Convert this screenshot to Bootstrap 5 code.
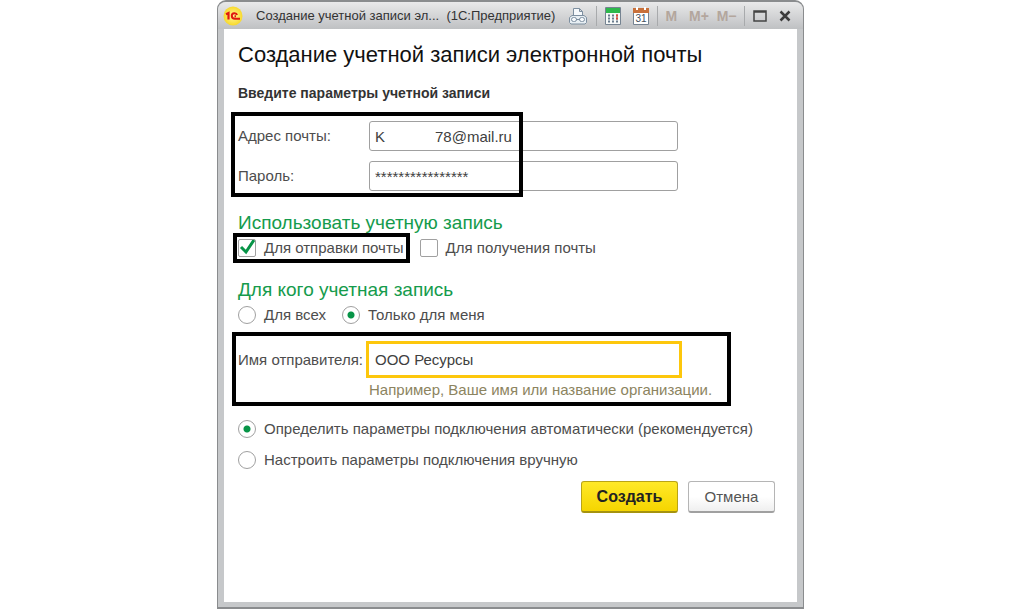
<!DOCTYPE html>
<html lang="ru">
<head>
<meta charset="utf-8">
<meta name="viewport" content="width=device-width, initial-scale=1">
<title>Создание учетной записи электронной почты</title>
<link rel="stylesheet" href="https://cdn.jsdelivr.net/npm/bootstrap@5.3.0/dist/css/bootstrap.min.css">
<style>
  body { font-family: "Liberation Sans", Arial, sans-serif; font-size: 15px; line-height: 20px; color: #4d4d4d; background: #fff; padding-right: 3px; }
  .app-window { max-width: 587px; background: #c6c8ca; border: 1px solid #8a8c8e; border-width: 2px 1px; border-radius: 9px 9px 0 0; padding: 0 6px 5px; }
  .title-bar { height: 27px; margin: 0 -6px; padding: 0 12px 0 5px; background: linear-gradient(#e9e9ea, #bfc1c3); border-radius: 8px 8px 0 0; color: #333; }
  .title-text { font-size: 13px; margin-left: 13px; }
  .tools { margin-left: 13px; }
  .tool { border: 0; background: none; padding: 0; line-height: 20px; color: #333; }
  .mem { font-size: 14px; font-weight: bold; color: #b3a69d; }
  .sep { width: 1px; height: 20px; background: #a8aaac; }
  .panel { background: #fff; padding: 14px 22px 20px 14px; }
  h1 { font-size: 22px; line-height: 24px; font-weight: 400; color: #111; margin-bottom: 17px; }
  .intro { font-size: 14px; line-height: 18px; font-weight: bold; color: #333; margin-bottom: 19px; }
  legend { font-size: 19px; line-height: 24px; color: #159b4c; margin-bottom: 3px; }
  .section { margin-bottom: 20px; }
  .section-tight { margin-bottom: 16px; }
  .stack { row-gap: 10px; }
  .name-label { width: 131px; flex: none; white-space: nowrap; }
  .field { height: 30px; max-width: 309px; padding: 0 5px; border: 1px solid #a0a0a0; border-radius: 3px; color: #404040; font-size: 15px; }
  .field-active, .field-active:focus { height: 37px; max-width: 316px; margin-left: -3px; padding: 0 6px; border: 3px solid #fdc70c; border-radius: 0; box-shadow: none; }
  .hint { color: #8c8460; line-height: 18px; margin: 3px 0 0 131px; }
  .tick { appearance: none; width: 18px; height: 18px; margin: 0; border: 1px solid #a0a0a0; background: #fff center / 18px no-repeat; flex: none; }
  .tick[type=checkbox] { border-radius: 2px; }
  .tick[type=radio] { border-radius: 50%; }
  .tick[type=radio]:checked { background-image: radial-gradient(circle, #079447 3px, transparent 4px); }
  .tick[type=checkbox]:checked { background-image: url("data:image/svg+xml,%3Csvg xmlns='http://www.w3.org/2000/svg' viewBox='0 0 18 18'%3E%3Cpath d='M3 8l5 5 8-12' fill='none' stroke='%23079447' stroke-width='3'/%3E%3C/svg%3E"); }
  .option { gap: 8px; height: 20px; }
  .choices { row-gap: 11px; }
  .marked { position: relative; }
  .marked::after { content: ""; position: absolute; border: 4px solid #000; pointer-events: none; }
  .mark-login::after { inset: -9px auto -6px -7px; width: 292px; }
  .mark-send::after { inset: -5px -6px -5px -5px; }
  .mark-name::after { inset: -9px auto -7px -6px; width: 499px; }
  .actions { gap: 10px; }
  .act { height: 32px; padding: 0; border-radius: 3px; line-height: 20px; }
  .act-create { width: 97px; font-size: 16px; font-weight: bold; color: #222; border: 1px solid #b9a416; border-bottom: 2px solid #a5930f; background: linear-gradient(#ffe928, #f5d500); }
  .act-cancel { width: 87px; color: #555; border: 1px solid #b5b5b5; border-bottom: 2px solid #a0a0a0; background: linear-gradient(#fff 50%, #efefef); }
</style>
</head>
<body>
<main class="app-window mx-auto min-vh-100 d-flex flex-column">
  <header class="title-bar d-flex align-items-center">
    <svg width="20" height="20" viewBox="0 0 20 20" aria-hidden="true"><defs><radialGradient id="g"><stop offset="0" stop-color="#fff79a"/><stop offset="1" stop-color="#f8d92b"/></radialGradient></defs><circle cx="10" cy="10" r="9.500" fill="url(#g)"/><path d="M3 8.200L5.500 7V13.500" fill="none" stroke="#e0180f" stroke-width="2.200"/><path d="M14 9C13.500 6.600 8.800 6.600 8.800 9.800c0 2.200 1.500 2.900 3.200 2.900h5M13 10.200h-1.500" fill="none" stroke="#e0180f" stroke-width="2"/></svg>
    <span class="title-text text-nowrap">Создание учетной записи эл...&nbsp; (1С:Предприятие)</span>
    <div class="tools d-flex align-items-center flex-fill justify-content-between">
      <button class="tool d-flex" aria-label="Печать"><svg width="20" height="18" viewBox="0 0 20 18" fill="#f6f9fc" stroke="#7d8fa0"><path d="M5.500 9V1.500h6l3 3V9M11.500 1.500v3h3"/><path d="M4 8.500L1.500 10.500v5l1.500 1.500h14l1.500-1.500v-5L16 8.500z" fill="#e8eff4"/><rect x="3.500" y="10.500" width="5" height="4" rx="2"/><rect x="11.500" y="10.500" width="5" height="4" rx="2"/><path d="M8 12.500h4"/></svg></button>
      <span class="sep"></span>
      <button class="tool d-flex" aria-label="Калькулятор"><svg width="16" height="18" viewBox="0 0 16 18"><path d="M.5.5h15v17H.5z" fill="#f7f9f8" stroke="#758391"/><path d="M1 1h14v5H1z" fill="#2db84b"/><path d="M3 8.500h10M3 11.500h10M3 14.500h10" stroke="#687b8c" stroke-width="2" stroke-dasharray="2"/><path d="M11 8.500h2M11 11.500h2" stroke="#e34b35" stroke-width="2"/></svg></button>
      <button class="tool d-flex ms-1" aria-label="Календарь"><svg width="16" height="18" viewBox="0 0 16 18"><path d="M.5 1.500h15v16H.5z" fill="#fff" stroke="#758391"/><path d="M0 1h16v5H0z" fill="#c8703a"/><path d="M4 0v3M12 0v3" stroke="#fff" stroke-width="2"/><text x="8" y="15" font-size="10" text-anchor="middle" fill="#42505e">31</text></svg></button>
      <span class="sep"></span>
      <button class="tool mem">M</button>
      <button class="tool mem ms-1">M+</button>
      <button class="tool mem">M−</button>
      <span class="sep"></span>
      <button class="tool d-flex" aria-label="Развернуть"><svg width="14" height="12" viewBox="0 0 14 12"><path d="M1 1h12v10H1zM1 2h12" fill="none" stroke="#444" stroke-width="1.500"/></svg></button>
      <button class="tool d-flex ms-1" aria-label="Закрыть"><svg width="12" height="12" viewBox="0 0 12 12"><path d="M1.500 1.500l9 9M10.500 1.500l-9 9" stroke="#3d3d3d" stroke-width="2.500"/></svg></button>
    </div>
  </header>

  <form class="panel flex-fill" onsubmit="return false">
    <h1>Создание учетной записи электронной почты</h1>
    <p class="intro">Введите параметры учетной записи</p>

    <div class="marked mark-login section stack d-grid">
      <div class="d-flex align-items-center"><label class="name-label" for="mail">Адрес почты:</label><input id="mail" class="form-control field" type="text" value="K&nbsp;&nbsp;&nbsp;&nbsp;&nbsp;&nbsp;&nbsp;&nbsp;&nbsp;&nbsp;&nbsp;&nbsp;78@mail.ru"></div>
      <div class="d-flex align-items-center"><label class="name-label" for="pass">Пароль:</label><input id="pass" class="form-control field" type="text" value="****************"></div>
    </div>

    <fieldset class="section">
      <legend>Использовать учетную запись</legend>
      <div class="d-flex gap-3">
        <div class="option marked mark-send d-flex align-items-center"><input class="tick" type="checkbox" id="send" checked><label for="send">Для отправки почты</label></div>
        <div class="option d-flex align-items-center"><input class="tick" type="checkbox" id="recv"><label for="recv">Для получения почты</label></div>
      </div>
    </fieldset>

    <fieldset class="section-tight">
      <legend>Для кого учетная запись</legend>
      <div class="d-flex gap-3">
        <div class="option d-flex align-items-center"><input class="tick" type="radio" name="who" id="all"><label for="all">Для всех</label></div>
        <div class="option d-flex align-items-center"><input class="tick" type="radio" name="who" id="me" checked><label for="me">Только для меня</label></div>
      </div>
    </fieldset>

    <div class="marked mark-name section">
      <div class="d-flex align-items-center"><label class="name-label" for="sender">Имя отправителя:</label><input id="sender" class="form-control field field-active" type="text" value="ООО Ресурсы"></div>
      <div class="hint">Например, Ваше имя или название организации.</div>
    </div>

    <div class="choices d-grid">
      <div class="option d-flex align-items-center"><input class="tick" type="radio" name="setup" id="auto" checked><label for="auto">Определить параметры подключения автоматически (рекомендуется)</label></div>
      <div class="option d-flex align-items-center"><input class="tick" type="radio" name="setup" id="manual"><label for="manual">Настроить параметры подключения вручную</label></div>
      <div class="actions d-flex justify-content-end">
        <button class="act act-create" type="submit">Создать</button>
        <button class="act act-cancel" type="button">Отмена</button>
      </div>
    </div>
  </form>
</main>
<script src="https://cdn.jsdelivr.net/npm/bootstrap@5.3.0/dist/js/bootstrap.bundle.min.js"></script>
</body>
</html>
